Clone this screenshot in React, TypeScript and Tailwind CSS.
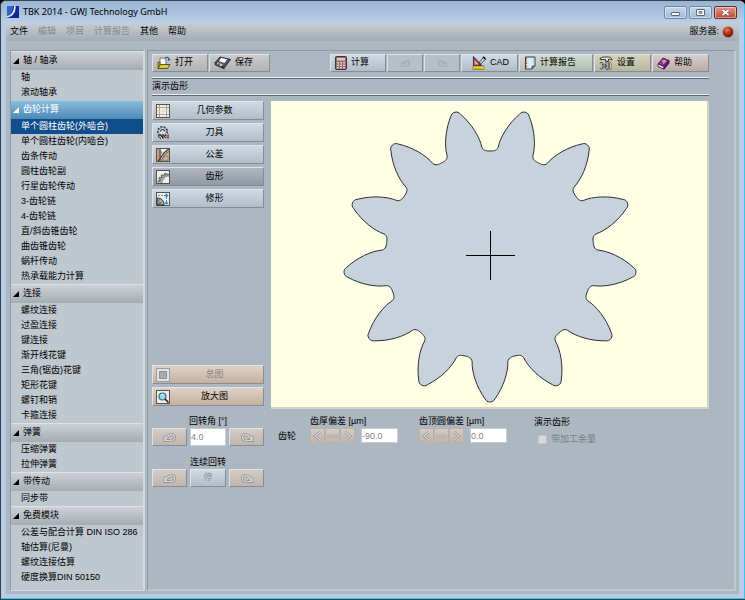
import { useState } from "react";
import type { ReactNode } from "react";
import clsx from "clsx";

const SECTIONS = [
  { title: "轴 / 轴承", items: ["轴", "滚动轴承"] },
  {
    title: "齿轮计算",
    items: [
      "单个圆柱齿轮(外啮合)",
      "单个圆柱齿轮(内啮合)",
      "齿条传动",
      "圆柱齿轮副",
      "行星齿轮传动",
      "3-齿轮链",
      "4-齿轮链",
      "直/斜齿锥齿轮",
      "曲齿锥齿轮",
      "蜗杆传动",
      "热承载能力计算",
    ],
  },
  {
    title: "连接",
    items: ["螺纹连接", "过盈连接", "键连接", "渐开线花键", "三角(锯齿)花键", "矩形花键", "螺钉和销", "卡箍连接"],
  },
  { title: "弹簧", items: ["压缩弹簧", "拉伸弹簧"] },
  { title: "带传动", items: ["同步带"] },
  {
    title: "免费模块",
    items: ["公差与配合计算 DIN ISO 286", "轴估算(尼曼)", "螺纹连接估算", "硬度换算DIN 50150"],
  },
];

const MENU = [
  { label: "文件", enabled: true },
  { label: "编辑", enabled: false },
  { label: "项目", enabled: false },
  { label: "计算报告", enabled: false },
  { label: "其他", enabled: true },
  { label: "帮助", enabled: true },
];

/* ---------- toolbar icons ---------- */

function OpenIcon() {
  return (
    <svg width="14" height="14" viewBox="0 0 14 14">
      <path d="M3 2h4l2 2v6H3z" fill="#f4f4f0" stroke="#55554a" strokeWidth=".7" />
      <path d="M1 6l2 0v5l-2 1.500z" fill="#b9a818" stroke="#3c3800" strokeWidth=".6" />
      <path d="M1 12.500l2.500-4h9.500l-2.500 4z" fill="#d6cf3a" stroke="#3c3800" strokeWidth=".8" />
      <path d="M8 2.500c1.500-2 3.500-1.500 4 1" fill="none" stroke="#2848c8" strokeWidth="1.200" />
      <path d="M10.500 3h3l-1.500 2.200z" fill="#2848c8" />
    </svg>
  );
}

function SaveIcon() {
  return (
    <svg width="17" height="14" viewBox="0 0 17 14">
      <path d="M6 1l10.500 2.500-6 8L.8 7z" fill="#55555c" stroke="#1c1c20" strokeWidth=".9" />
      <path d="M.8 7l9.700 4.500v2L.8 9z" fill="#2c2c32" />
      <path d="M7.300 1.800l6 1.600-3 3.600-5.300-2z" fill="#f2f5fa" />
      <path d="M13.500 3.500l1.500.3-1.700 2.200-1.500-.6z" fill="#3448c0" />
      <path d="M4 6.200l5 2.200-1.700 2.200-4.800-2.300z" fill="#c4c8ce" />
      <path d="M4.800 7.200l1.300.6-1.100 1.400-1.200-.6z" fill="#2b2b30" />
    </svg>
  );
}

function CalcIcon() {
  return (
    <svg width="12" height="14" viewBox="0 0 12 14">
      <rect x=".5" y=".5" width="11" height="13" rx="1" fill="#8e6b70" stroke="#4a2b30" />
      <rect x="2" y="2" width="8" height="2.500" fill="#d9c9c4" />
      <path
        d="M2 6h2v1.500H2zM5 6h2v1.500H5zM8 6h2v1.500H8zM2 8.500h2V10H2zM5 8.500h2V10H5zM8 8.500h2V10H8zM2 11h2v1.500H2zM5 11h2v1.500H5zM8 11h2v1.500H8z"
        fill="#e6cdcd"
      />
    </svg>
  );
}

// embossed arrow, mirrored for redo
function TurnIcon({ redo, small }: { redo?: boolean; small?: boolean }) {
  const d = "M2 3.500v5h5M2.500 8C4 3 11 .5 11.500 5c0 2-1 3.500-3 3.500";
  return (
    <svg width={small ? 11 : 14} height={small ? 9 : 11} viewBox="0 0 14 11">
      <g transform={redo ? "matrix(-1 0 0 1 14 0)" : undefined} fill="none">
        <path d={d} stroke="#8d949b" strokeWidth={small ? "1.800" : "2.800"} />
        <path d={d} stroke="#d8d8d6" strokeWidth={small ? ".8" : "1.200"} />
      </g>
    </svg>
  );
}

function CadIcon() {
  return (
    <svg width="14" height="14" viewBox="0 0 14 14">
      <path d="M1.500 1v8.500h8z" fill="#e07818" stroke="#39228c" strokeWidth="1.100" />
      <path d="M3.300 5v2.800h2.800z" fill="#c4cfda" />
      <path d="M7 8.500l1-3 3.500-4 2 1.500-3.800 4.200z" fill="#d8dce4" stroke="#222" strokeWidth=".8" />
      <path d="M11 .8l2.500 2" stroke="#111" strokeWidth="1.600" />
      <path d="M1 10h11v3.500H1z" fill="#f2e23c" stroke="#6a5c00" strokeWidth=".6" />
      <path d="M3 11.500V13M5 11.500V13M7 11.500V13M9 11.500V13" stroke="#6a5c00" strokeWidth=".6" />
    </svg>
  );
}

function ReportIcon() {
  return (
    <svg width="12" height="14" viewBox="0 0 12 14">
      <path d="M1.500 1h9.500v9l-3 3H1.500z" fill="#dfe9ee" stroke="#23404e" />
      <path d="M11 10l-3 3v-3z" fill="#5fa0b8" stroke="#23404e" strokeWidth=".7" />
      <path d="M10 2v7" stroke="#8cc0d0" />
      <path d="M2.500 2v10" stroke="#cf3a30" strokeWidth="1.300" strokeDasharray="1.200 1.200" />
    </svg>
  );
}

function ToolsIcon() {
  return (
    <svg width="14" height="14" viewBox="0 0 14 14">
      <path d="M1 2.500l3-1.500h5.500c2 0 3.300 1 3.500 3l-2-.8H9.500v2h-3v-1.700H1z" fill="#e2e4e2" stroke="#2c2e2b" strokeWidth=".9" />
      <path d="M7 5.500h2.200v7.800H7z" fill="#d4d6d4" stroke="#2c2e2b" strokeWidth=".8" />
      <path d="M.8 7l2.200-.8 1 1.600L3 9h4v2H3.500l.3 1.500-1.500.8-1.500-1.200" fill="#b4bab8" stroke="#2c2e2b" strokeWidth=".8" />
      <path d="M11 6l1 1v6.300h-1.500V7z" fill="#f4f6f2" stroke="#3b3d3a" strokeWidth=".6" />
    </svg>
  );
}

function BookIcon() {
  return (
    <svg width="13" height="13" viewBox="0 0 13 13">
      <path d="M1 7l5-6 6 2.500-5 6z" fill="#8c2fa0" stroke="#3b0b4c" strokeWidth=".8" />
      <path d="M1 7l6 2.500v2.700L1 9.500z" fill="#f0e6ee" stroke="#3b0b4c" strokeWidth=".8" />
      <path d="M7 9.500l5-6v2.700l-5 6z" fill="#6e1b84" stroke="#3b0b4c" strokeWidth=".8" />
      <path d="M5 4.500l2-1.200 1.500.9-1.800 1.300-.4 1" fill="none" stroke="#f5d858" strokeWidth="1.100" />
    </svg>
  );
}

/* ---------- icons of the view buttons ---------- */

function Sheet({ children, faded }: { children: ReactNode; faded?: boolean }) {
  return (
    <svg width="14" height="14" viewBox="0 0 14 14" className="shrink-0">
      <rect
        x=".5"
        y=".5"
        width="13"
        height="13"
        fill={faded ? "#e2e3e4" : "#f3efe6"}
        stroke={faded ? "#9a9da1" : "#55534e"}
      />
      {children}
    </svg>
  );
}

function GridSheetIcon() {
  return (
    <Sheet>
      <path d="M3.500 1v12M10.500 1v12M1 3.500h12M1 10.500h12" stroke="#a99688" strokeWidth=".9" />
      <path d="M7 1v12M1 7h12" stroke="#ddd3c8" strokeWidth=".7" />
    </Sheet>
  );
}

function CutterIcon() {
  return (
    <svg width="14" height="14" viewBox="0 0 14 14" className="shrink-0">
      <circle cx="6.500" cy="5.500" r="4.500" fill="#d4d6d8" stroke="#2b2d30" strokeWidth="2" strokeDasharray="1.800 1.300" />
      <circle cx="6.500" cy="5.500" r="3.900" fill="#dadcde" stroke="#6b6e72" strokeWidth=".6" />
      <path d="M4.500 5.500a2 2 0 0 1 4 0" fill="none" stroke="#35373a" strokeWidth="1.200" />
      <path d="M2 9.500l3 3M4 8.500l3.500 4M6.500 8l3 4" stroke="#2a2c2e" strokeWidth="1.200" />
      <path d="M3 10l3 2" stroke="#e8e8e6" strokeWidth=".8" />
      <path d="M10.500 8.500l2.500 1v3.500l-2.500-.5z" fill="#c84a2c" />
      <path d="M11.500 7.500l1.500 1v2z" fill="#3060a8" />
    </svg>
  );
}

function ToleranceIcon() {
  return (
    <Sheet>
      <path d="M1 1h2v12H1z" fill="#d99a62" />
      <path d="M3 1h2v12H3z" fill="#6a7898" />
      <path d="M5 13C6 8 9 4 13 1.500V13z" fill="#c4b294" />
      <path d="M2 13C5 11 5 8 8 5s3-3 5-4" fill="none" stroke="#3a3430" strokeWidth="1.200" />
      <path d="M5 13c2-4 4-7 8-9.500" fill="none" stroke="#7a5c40" strokeWidth=".9" />
      <path d="M8 8h4v4.500H7z" fill="none" stroke="#6a5a48" strokeWidth=".8" strokeDasharray="1 .8" />
      <path d="M5 3l1.500 4" stroke="#c07838" strokeWidth="1" />
    </Sheet>
  );
}

function ToothIcon() {
  return (
    <Sheet>
      <path d="M3 13c0-5.500 4-9.500 10-9.500V13z" fill="#9da1a5" />
      <path
        d="M2 12.500l.2-1.800 1.600.1.300-1.300-1.500-.8.900-1.500 1.600.8.900-1-1-1.400 1.300-1 1.200 1.200 1.200-.5-.2-1.700 1.600-.4.700 1.500h1.700"
        fill="#9da1a5"
        stroke="#45484c"
        strokeWidth=".8"
      />
      <path d="M6.500 13c0-3.500 3-6.500 6.500-6.500V13z" fill="#eeeeec" />
    </Sheet>
  );
}

function ModifyIcon() {
  return (
    <Sheet>
      <path d="M1 6c4 0 7 2 7 7H1z" fill="#b0b2b0" stroke="#222" strokeWidth=".9" />
      <path d="M1.500 8l5 5M1.500 10.500l2.500 2.500M7 8l-5 5M4.500 6.500l-3 3" stroke="#444" strokeWidth=".6" />
      <path d="M2 3.500h8M10.500 2v10" stroke="#2b9be0" strokeWidth="1" strokeDasharray="2 1" />
      <path d="M8.500 3.500l2-2 2 2-2 2zM8.500 11l2-1.800 2 1.800-2 1.800z" fill="#2b8bdc" />
    </Sheet>
  );
}

function OverviewIcon() {
  return (
    <Sheet faded>
      <path d="M3.500 3.500h7v7h-7z" fill="#a9abae" stroke="#8d9094" />
    </Sheet>
  );
}

function ZoomIcon() {
  return (
    <Sheet>
      <circle cx="6.500" cy="6.500" r="3.500" fill="#9fd0ee" stroke="#33668c" strokeWidth="1.200" />
      <path d="M5 5.500q1-1.200 2.500-.8" stroke="#fff" fill="none" />
      <path d="M9.200 9.200l3.300 3.300" stroke="#2a2a2a" strokeWidth="1.700" />
    </Sheet>
  );
}

/* ---------- gear drawing ---------- */

const TEETH = 13;

// half of one tooth: cubic segments from the root centre to the tip, as [offset, radius]
const FLANK: [number, number][] = [
  [24.9, 101], [22, 101.7], [18.4, 102.6], [17.9, 106.5],
  [18.3, 117], [13.5, 132], [5, 143.8],
  [3.8, 146], [2.5, 147], [0, 147],
];

function gearPath() {
  const tooth = [...FLANK, ...FLANK.slice(0, -1).reverse().map(([u, v]) => [-u, v] as [number, number])];
  let d = "";
  for (let i = 0; i < TEETH; i++) {
    const a = (i * 2 * Math.PI) / TEETH;
    const pts = tooth.map(([u, v]) => {
      const x = u * Math.cos(a) - v * Math.sin(a);
      const y = u * Math.sin(a) + v * Math.cos(a);
      return `${x.toFixed(2)},${y.toFixed(2)}`;
    });
    d += (i === 0 ? "M" + pts[0] : "L" + pts[0]) + "C" + pts.slice(1).join(" ");
  }
  return d + "Z";
}

function GearView() {
  return (
    <div className="flex h-[308px] flex-1 items-center justify-center border-r-2 border-b-2 border-[#d3d3c4] bg-[#ffffe6]">
      <svg width="300" height="300" viewBox="-151 -151 300 300">
        <path d={gearPath()} fill="#c8d2dd" stroke="#2a2e33" strokeWidth="1" />
        <path d="M-24 .5H25M.5-24V25" stroke="#000" strokeWidth="1" />
      </svg>
    </div>
  );
}

/* ---------- building blocks ---------- */

const BEVEL = "border border-t-[#dde3e8] border-l-[#dde3e8] border-r-[#858d96] border-b-[#858d96]";
const BLUE = "bg-linear-to-b from-[#d0dae4] to-[#b1bdc9]";
const GREY = "bg-linear-to-b from-[#cbcbcb] to-[#b2b2b2]";
const TAN = "bg-linear-to-b from-[#dfd1c6] to-[#c6b09f]";
const TAN_OFF = "bg-linear-to-b from-[#d4cbc5] to-[#c1b6ae]";

function ToolButton({ icon, label, className, disabled, name }: {
  icon: ReactNode;
  label?: string;
  className: string;
  disabled?: boolean;
  name?: string;
}) {
  return (
    <button
      disabled={disabled}
      aria-label={name}
      className={clsx("flex h-[18px] items-center gap-1 whitespace-nowrap", BEVEL, label ? "pl-1" : "justify-center", className)}
    >
      {icon}
      {label}
    </button>
  );
}

function ViewButton({ icon, label, className, disabled, onClick }: {
  icon: ReactNode;
  label: string;
  className: string;
  disabled?: boolean;
  onClick?: () => void;
}) {
  return (
    <button
      disabled={disabled}
      onClick={onClick}
      className={clsx("flex h-[19px] w-full items-center pr-1 pl-[3px]", BEVEL, className, disabled && "text-[#8b8480]")}
    >
      {icon}
      <span className="flex-1">{label}</span>
    </button>
  );
}

function Groove() {
  return <hr className="h-[2px] border-t border-b border-t-[#eceff1] border-b-[#60666c]" />;
}

function Stepper({ name }: { name: string }) {
  return (
    <div className="flex" role="group" aria-label={name}>
      {["M9 2L4 6l5 4", "M1 6h11", "M4 2l5 4-5 4"].map((d, i) => (
        <button
          key={d}
          disabled
          aria-label={["减小", "重置", "增大"][i]}
          className={clsx("flex h-[15px] w-[15px] items-center justify-center border border-[#b9b2ab]", TAN_OFF)}
        >
          <svg width="13" height="12" viewBox="0 0 13 12" className="shrink-0">
            <path d={d} fill="none" stroke="#92969a" strokeWidth="2.400" />
            <path d={d} fill="none" stroke="#d9d5d0" strokeWidth="1.100" />
          </svg>
        </button>
      ))}
    </div>
  );
}

function Deviation({ id, label, value }: { id: string; label: string; value: string }) {
  return (
    <div>
      <label htmlFor={id} className="block h-[14px] leading-[14px] whitespace-nowrap">{label}</label>
      <div className="flex gap-[6px]">
        <Stepper name={label} />
        <input
          id={id}
          defaultValue={value}
          disabled
          className="h-[15px] w-[37px] border border-[#c9ced3] bg-white text-[#858585]"
        />
      </div>
    </div>
  );
}

function Sidebar() {
  const [selected, setSelected] = useState("单个圆柱齿轮(外啮合)");

  return (
    <nav className="w-[135px] shrink-0 border-t border-r-2 border-b border-l border-t-[#929ca6] border-r-[#d3d9df] border-b-[#d3d9df] border-l-[#929ca6] bg-[#bfc7cf]">
      {SECTIONS.map((section) => {
        const active = section.items.includes(selected);
        return (
          <section key={section.title}>
            <button
              className={clsx(
                "flex h-[19px] w-full items-center gap-1 border-t pl-[2px]",
                active
                  ? "border-[#a9cde2] bg-linear-to-b from-[#8bbddb] to-[#4b8ab7] text-white"
                  : "border-[#dfe2e5] bg-linear-to-b from-[#cdd1d6] to-[#a6acb3]",
              )}
            >
              <svg width="6" height="6" viewBox="0 0 6 6">
                <path d="M6 0v6H0z" fill="currentColor" />
              </svg>
              {section.title}
            </button>
            <ul>
              {section.items.map((item) => (
                <li key={item}>
                  <a
                    href="#"
                    onClick={() => setSelected(item)}
                    className={clsx(
                      "block h-[15px] pl-[10px] leading-[15px] whitespace-nowrap",
                      item === selected && "bg-[#114d8b] text-white",
                    )}
                  >
                    {item}
                  </a>
                </li>
              ))}
            </ul>
          </section>
        );
      })}
    </nav>
  );
}

const VIEWS = [
  { label: "几何参数", icon: <GridSheetIcon /> },
  { label: "刀具", icon: <CutterIcon /> },
  { label: "公差", icon: <ToleranceIcon /> },
  { label: "齿形", icon: <ToothIcon /> },
  { label: "修形", icon: <ModifyIcon /> },
];

function Workspace() {
  const [view, setView] = useState("齿形");

  return (
    <main className="min-w-0 flex-1 border-t border-r-2 border-b-2 border-l border-t-[#8f99a3] border-r-[#bec8d1] border-b-[#bec8d1] border-l-[#8f99a3] pt-[3px] pr-[25px] pl-1">
      <div className="flex">
        <div className="flex gap-px">
          <ToolButton icon={<OpenIcon />} label="打开" className={clsx("w-14", GREY)} />
          <ToolButton icon={<SaveIcon />} label="保存" className={clsx("w-[61px]", GREY)} />
        </div>
        <div className="ml-auto flex gap-px">
          <ToolButton icon={<CalcIcon />} label="计算" className={clsx("w-14", BLUE)} />
          <ToolButton icon={<TurnIcon small />} name="撤消" disabled className="w-9 bg-[#b6c0ca]" />
          <ToolButton icon={<TurnIcon small redo />} name="重做" disabled className="w-9 bg-[#b6c0ca]" />
          <ToolButton icon={<CadIcon />} label="CAD" className={clsx("w-[57px] pl-[10px]", BLUE)} />
          <ToolButton icon={<ReportIcon />} label="计算报告" className="w-[74px] bg-linear-to-b from-[#d3dbd2] to-[#b2bcb2]" />
          <ToolButton icon={<ToolsIcon />} label="设置" className="w-[57px] bg-linear-to-b from-[#d4d4bd] to-[#b7b79e]" />
          <ToolButton icon={<BookIcon />} label="帮助" className="w-[57px] bg-linear-to-b from-[#d8cdc8] to-[#b9aca6]" />
        </div>
      </div>

      <div className="mt-[5px] mb-[5px]">
        <Groove />
        <h1 className="h-[15px] leading-[15px]">演示齿形</h1>
        <Groove />
      </div>

      <div className="flex gap-[7px]">
        <div className="flex w-28 shrink-0 flex-col gap-[3px] pb-[3px]">
          {VIEWS.map((v) => (
            <ViewButton
              key={v.label}
              icon={v.icon}
              label={v.label}
              onClick={() => setView(v.label)}
              className={v.label === view ? "bg-linear-to-b from-[#b0b6c0] to-[#9299a6]" : BLUE}
            />
          ))}
          <div className="mt-auto" />
          <ViewButton icon={<OverviewIcon />} label="总图" disabled className={TAN} />
          <ViewButton icon={<ZoomIcon />} label="放大图" className={TAN} />
        </div>
        <GearView />
      </div>

      <div className="mt-[5px] flex">
        <div className="w-28 shrink-0">
          <label htmlFor="angle" className="block h-[14px] text-center leading-[14px]">回转角 [°]</label>
          <div className="flex justify-between">
            <ToolButton icon={<TurnIcon />} name="左转" disabled className={clsx("w-[35px]", TAN_OFF)} />
            <input
              id="angle"
              defaultValue="4.0"
              disabled
              className="h-[18px] w-9 border border-[#c9ced3] bg-white text-[#858585]"
            />
            <ToolButton icon={<TurnIcon redo />} name="右转" disabled className={clsx("w-[35px]", TAN_OFF)} />
          </div>
          <div className="mt-[9px] h-[14px] text-center leading-[14px]">连续回转</div>
          <div className="flex justify-between">
            <ToolButton icon={<TurnIcon />} name="连续左转" disabled className={clsx("w-[35px]", TAN_OFF)} />
            <button disabled className={clsx("h-[18px] w-9 text-[#8b939b]", BEVEL, BLUE)}>停</button>
            <ToolButton icon={<TurnIcon redo />} name="连续右转" disabled className={clsx("w-[35px]", TAN_OFF)} />
          </div>
        </div>
        <span className="mt-[15px] ml-[14px] h-[14px] leading-[14px]">齿轮</span>
        <div className="ml-[14px] flex gap-[21px]">
          <Deviation id="thickness" label="齿厚偏差 [µm]" value="-90.0" />
          <Deviation id="tip" label="齿顶圆偏差 [µm]" value="0.0" />
        </div>
        <fieldset className="ml-[27px]">
          <legend className="h-[17px] leading-[17px]">演示齿形</legend>
          <label className="ml-1 flex h-[17px] items-center gap-1 whitespace-nowrap text-[#7c8086]">
            <input
              type="checkbox"
              disabled
              className="h-[9px] w-[9px] appearance-none border border-[#c4c4c4] bg-[#d8d8d6]"
            />
            带加工余量
          </label>
        </fieldset>
      </div>
    </main>
  );
}

function TitleBar() {
  const box = "flex h-[13px] w-[23px] items-center justify-center rounded-[2px] border shadow-[inset_0_0_0_1px_rgba(255,255,255,0.45)]";
  return (
    <header className="flex h-[22px] items-center bg-linear-to-b from-[#98b3d3] to-[#bbd0e8] pr-[7px] pl-[6px]">
      <svg width="12" height="12" viewBox="0 0 12 12">
        <rect width="12" height="12" fill="#102a94" />
        <path d="M0 0h6l-.5 4C5 7 3 9 0 10z" fill="#2f66cc" />
        <path d="M7 0c0 5-2 9-7 10v1.500C6 11 9 6 8.600 0z" fill="#e6eef8" />
      </svg>
      <span className="ml-1 font-['Noto_Sans'] text-[9px]">TBK 2014 - GWJ Technology GmbH</span>
      <div className="ml-auto flex gap-[2px]">
        <button aria-label="最小化" className={clsx(box, "border-[#6d87a8] bg-linear-to-b from-[#c6d7ea] to-[#a3bad5]")}>
          <svg width="9" height="7" viewBox="0 0 9 7">
            <rect x=".5" y="3.500" width="8" height="3" rx=".5" fill="#fff" stroke="#5c6878" />
          </svg>
        </button>
        <button aria-label="最大化" className={clsx(box, "border-[#6d87a8] bg-linear-to-b from-[#c6d7ea] to-[#a3bad5]")}>
          <svg width="9" height="7" viewBox="0 0 9 7">
            <rect x=".5" y=".5" width="8" height="6" rx=".5" fill="#fff" stroke="#5c6878" />
            <rect x="3" y="2.500" width="3" height="2" fill="#8ea4c0" stroke="#5c6878" strokeWidth=".6" />
          </svg>
        </button>
        <button aria-label="关闭" className={clsx(box, "border-[#6a2a26] bg-linear-to-b from-[#dc9a88] to-[#bf4430]")}>
          <svg width="9" height="7" viewBox="0 0 9 7">
            <path d="M1.500 1l6 5M7.500 1l-6 5" stroke="#6b4545" strokeWidth="2.800" />
            <path d="M1.500 1l6 5M7.500 1l-6 5" stroke="#fff" strokeWidth="1.800" />
          </svg>
        </button>
      </div>
    </header>
  );
}

export default function App() {
  return (
    <div className="flex min-h-screen flex-col bg-black font-['Liberation_Sans','Noto_Sans_CJK_SC',sans-serif] text-[9px] text-black">
      <div className="flex flex-1 flex-col overflow-hidden rounded-t-[6px] border-t border-b border-l border-[#3a4048] bg-[#b7cce5]">
        <div className="flex flex-1 flex-col border-r border-b border-r-[#3cc4e8] border-b-[#3cc4e8]">
          <TitleBar />
          <div className="mr-[5px] mb-1 ml-[5px] flex flex-1 flex-col bg-[#adb7c1]">
            <div className="flex h-[18px] items-center bg-linear-to-b from-[#c9cdd3] to-[#a3abb4] pr-[5px] pl-1">
              <div className="flex gap-[10px]" role="menubar">
                {MENU.map((m) => (
                  <button key={m.label} role="menuitem" disabled={!m.enabled} className="disabled:text-[#858b92]">
                    {m.label}
                  </button>
                ))}
              </div>
              <span className="ml-auto">服务器:</span>
              <svg width="12" height="12" viewBox="0 0 12 12" className="ml-[3px]">
                <defs>
                  <radialGradient id="lamp" cx=".4" cy=".3" r=".7">
                    <stop offset="0" stopColor="#e08060" />
                    <stop offset=".5" stopColor="#b0361a" />
                    <stop offset="1" stopColor="#6c1a08" />
                  </radialGradient>
                </defs>
                <circle cx="6" cy="6" r="5.400" fill="url(#lamp)" />
              </svg>
            </div>
            <div className="mt-[9px] mr-[3px] mb-[3px] ml-1 flex flex-1 gap-[2px]">
              <Sidebar />
              <Workspace />
            </div>
          </div>
        </div>
      </div>
    </div>
  );
}
